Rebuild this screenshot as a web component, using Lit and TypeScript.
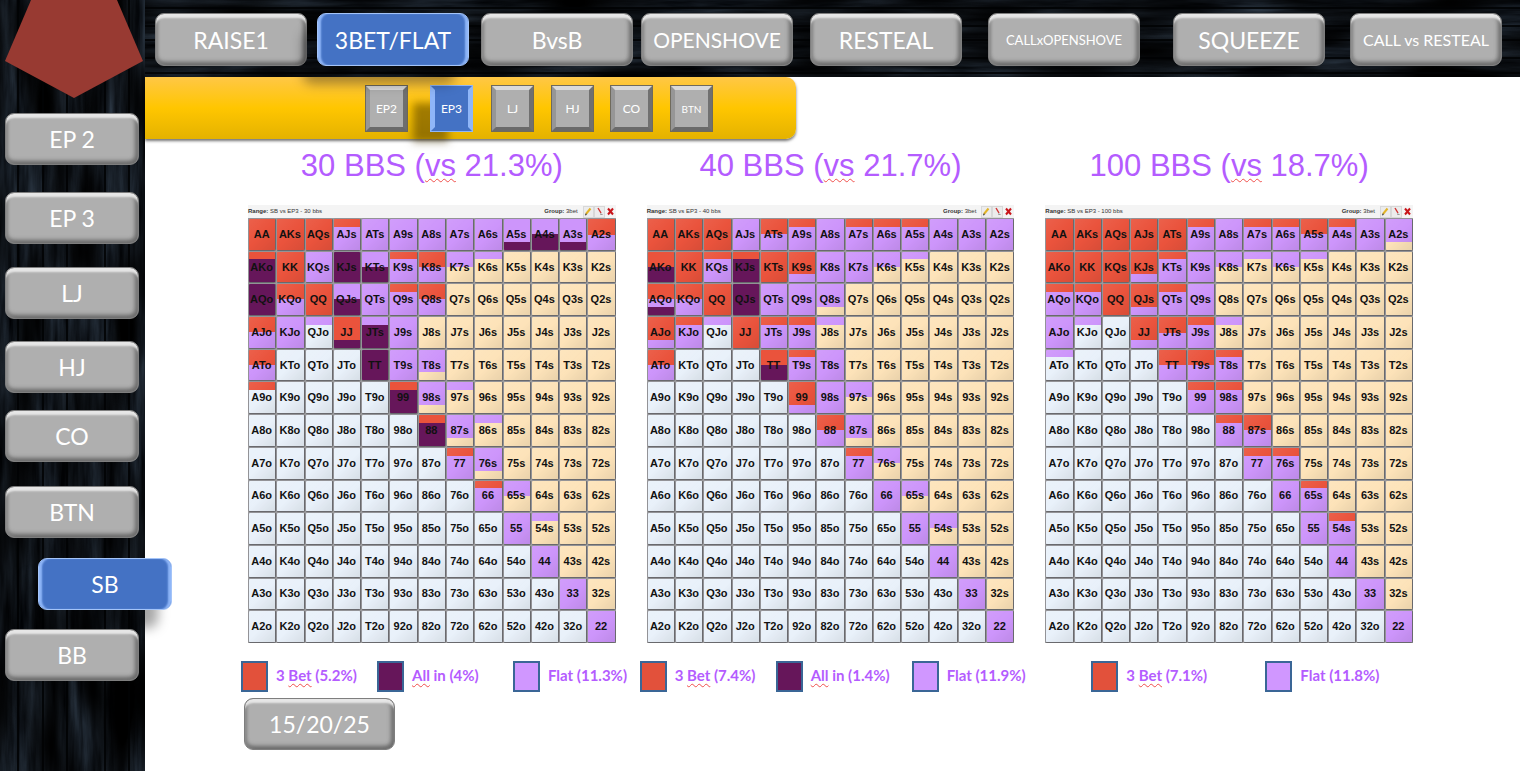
import { LitElement, html, css, svg } from "lit";
import { customElement, property } from "lit/decorators.js";

interface LegendItem {
  kind: "bet" | "shove" | "flat";
  marked: string;
  rest: string;
  lead: string;
}

interface Chart {
  stack: string;
  pct: string;
  actions: Record<string, string>;
  legend: LegendItem[];
}

const RANKS = [..."AKQJT98765432"];

const COLORS: Record<string, string> = {
  R: "#ea533c",
  P: "#cd95fb",
  D: "#66165a",
  S: "#fde3b9",
  O: "#e9f1fa",
};

/* Every hand is split in quarters, top to bottom: R = 3-bet, P = flat, D = all in, N = fold. */
const CHARTS: Chart[] = [
  {
    stack: "30",
    pct: "21.3%",
    actions: {
      RRRR: "AA AKs AQs KK QQ",
      PPPP: "ATs A9s A8s A7s A6s KQs QTs KJo J9s T9s 55 44 33 22",
      DDDD: "KJs AQo TT",
      RPPP: "AJs K9s Q9s 77 66",
      PPPD: "A5s A3s",
      PPDD: "A4s KTs QJs",
      RRPP: "A2s K8s KQo Q8s AJo ATo",
      RDDD: "AKo 99 88",
      PPNN: "K7s 65s",
      PNNN: "K6s QJo 97s 86s 54s",
      RRRD: "JJ",
      PDDD: "JTs",
      PPPN: "T8s 98s 87s 76s",
      RNNN: "A9o",
    },
    legend: [
      { kind: "bet", lead: "3 ", marked: "Bet", rest: " (5.2%)" },
      { kind: "shove", lead: "", marked: "All", rest: " in (4%)" },
      { kind: "flat", lead: "Flat (11.3%)", marked: "", rest: "" },
    ],
  },
  {
    stack: "40",
    pct: "21.7%",
    actions: {
      RRRR: "AA AKs AQs KK KTs QQ JJ",
      PPPP: "AJs A8s A4s A3s A2s K8s K7s QTs Q9s T8s 98s 66 55 44 33 22",
      DDDD: "QJs",
      RRPP: "ATs KQo ATo 88",
      RPPP: "A9s A7s A6s A5s KQs KJo JTs J9s T9s 77",
      RRDD: "AKo TT",
      RDDD: "KJs",
      RRRP: "K9s AJo 99",
      PPNN: "K6s 97s 76s 65s 54s",
      PNNN: "K5s QJo J8s",
      RRPD: "AQo",
      PPPN: "Q8s 87s",
    },
    legend: [
      { kind: "bet", lead: "3 ", marked: "Bet", rest: " (7.4%)" },
      { kind: "shove", lead: "", marked: "All", rest: " in (1.4%)" },
      { kind: "flat", lead: "Flat (11.9%)", marked: "", rest: "" },
    ],
  },
  {
    stack: "100",
    pct: "18.7%",
    actions: {
      RRRR: "AA AKs AQs AJs ATs AKo KK KQs QQ",
      PPPP: "A8s A3s K9s Q9s AJo 66 55 44 33 22",
      RPPP: "A9s A7s A6s A4s KTs AQo KQo QTs J9s T8s 99 98s 88 77 76s 65s 54s",
      RRPP: "A5s JTs TT T9s 87s",
      PPPN: "A2s",
      RRRP: "KJs QJs JJ",
      PPNN: "K8s K6s",
      PNNN: "K7s K5s KJo J8s ATo",
    },
    legend: [
      { kind: "bet", lead: "3 ", marked: "Bet", rest: " (7.1%)" },
      { kind: "flat", lead: "Flat (11.8%)", marked: "", rest: "" },
    ],
  },
];

const SHEEN = "linear-gradient(135deg,rgba(255,255,255,.08),transparent 50%,rgba(0,0,0,.08))";

function cellFill(pattern: string, fold: string): string {
  const stops = [...pattern].map((c, i) => {
    const color = COLORS[c === "N" ? fold : c];
    return `${color} ${i * 25}% ${(i + 1) * 25}%`;
  });
  const bands = `linear-gradient(${stops.join(",")})`;
  return pattern.includes("D") ? bands : `${SHEEN},${bands}`;
}

@customElement("range-chart")
class RangeChart extends LitElement {
  @property({ attribute: false }) chart!: Chart;

  static styles = css`
    :host { display: block; min-width: 0; }
    h2 {
      margin: 0 0 12px;
      font: 400 31px/54px "Liberation Sans", Arial, sans-serif;
      color: #b45cff;
      text-align: center;
      white-space: nowrap;
    }
    .marked {
      text-decoration: underline wavy #f0504b 1px;
      text-underline-offset: 2px;
      text-decoration-skip-ink: none;
    }
    .bar {
      display: flex;
      align-items: center;
      height: 13px;
      background: #f4f4f4;
      color: #333;
      font: 6px/13px "Liberation Sans", sans-serif;
      white-space: nowrap;
    }
    .group { margin-left: auto; margin-right: 5px; }
    .tool {
      width: 11px;
      height: 12px;
      padding: 0;
      border: 1px solid #d8d8d8;
      background: #ececec;
      display: grid;
      place-items: center;
    }
    .tool.close { border-color: transparent; background: none; }
    .tool svg { width: 9px; height: 9px; display: block; }
    table {
      width: 100%;
      height: 425px;
      table-layout: fixed;
      border-spacing: 0;
      background: #aaa;
    }
    td {
      padding: 0 1px 1px 0;
      border: 1px solid #69696d;
      border-top-color: #939397;
      border-left-color: #939397;
      border-radius: 2px;
      text-align: center;
      vertical-align: middle;
      color: #111;
      font: 700 11px/14px "Liberation Sans", Arial, sans-serif;
    }
    .legend {
      display: flex;
      list-style: none;
      margin: 18px 0 0 -7px;
      padding: 0;
      color: #b45cff;
      font: 700 15px/28px Lato, sans-serif;
      white-space: nowrap;
    }
    .legend li { flex: none; width: 136px; display: flex; gap: 8px; }
    .legend.two { margin-left: 46px; }
    .legend.two li { width: 174px; }
    .swatch {
      box-sizing: border-box;
      width: 27px;
      height: 31px;
      border: 2px solid #3a6696;
    }
    .bet { background: #e2513b; }
    .shove { background: #66165a; }
    .flat { background: #d097ff; }
  `;

  render() {
    const c = this.chart;
    const lookup = new Map<string, string>();
    for (const [pattern, hands] of Object.entries(c.actions))
      for (const hand of hands.split(" ")) lookup.set(hand, pattern);

    return html`
      <h2>${c.stack} BBS (<span class="marked">vs</span> ${c.pct})</h2>
      <div class="bar">
        <span><b>Range:</b> SB vs EP3 - ${c.stack} bbs</span>
        <span class="group"><b>Group:</b> 3bet</span>
        <button class="tool" aria-label="Edit">
          <svg viewBox="0 0 9 9"><path d="M2 7 L6.5 1.5" stroke="#e2b428" stroke-width="2"/><path d="M1.4 8.2 L2.4 6.6" stroke="#444" stroke-width="1.2"/></svg>
        </button>
        <button class="tool" aria-label="Clear">
          <svg viewBox="0 0 9 9"><path d="M3 1 L6 6" stroke="#d03030" stroke-width="1.4"/><path d="M5 7 L7.5 7.5" stroke="#888" stroke-width="1"/></svg>
        </button>
        <button class="tool close" aria-label="Close">
          <svg viewBox="0 0 9 9"><path d="M2 1.5 L7 7.5 M7 1.5 L2 7.5" stroke="#c8151b" stroke-width="2"/></svg>
        </button>
      </div>
      <table aria-label="SB vs EP3, ${c.stack} bbs">
        <tbody>
          ${RANKS.map((_, row) => html`<tr>
            ${RANKS.map((_, col) => {
              const suffix = row === col ? "" : col > row ? "s" : "o";
              const hand = RANKS[Math.min(row, col)] + RANKS[Math.max(row, col)] + suffix;
              const fill = cellFill(lookup.get(hand) ?? "NNNN", col > row ? "S" : "O");
              return html`<td style="background:${fill}">${hand}</td>`;
            })}
          </tr>`)}
        </tbody>
      </table>
      <ul class="legend ${c.legend.length === 2 ? "two" : ""}">
        ${c.legend.map((l) => html`<li>
          <span class="swatch ${l.kind}"></span>
          <span>${l.lead}${l.marked ? html`<span class="marked">${l.marked}</span>` : ""}${l.rest}</span>
        </li>`)}
      </ul>
    `;
  }
}

@customElement("wood-panel")
class WoodPanel extends LitElement {
  @property({ type: Boolean }) vertical = false;

  static styles = css`
    :host { display: block; background: #06080b; overflow: hidden; }
    svg { display: block; width: 100%; height: 100%; }
  `;

  render() {
    const v = this.vertical;
    const grain = v ? "0.12 0.012" : "0.012 0.12";
    const patch = v ? "0.03 0.008" : "0.008 0.03";
    const seams = v ? [17, 42, 66, 104, 128] : [7, 25, 39, 57, 72];
    return html`<svg aria-hidden="true">
      <filter id="grain" x="0" y="0" width="100%" height="100%" color-interpolation-filters="sRGB">
        <feTurbulence type="fractalNoise" baseFrequency=${grain} numOctaves="4" seed="8" result="g" />
        <feColorMatrix in="g" result="lines" values="0.22 0 0 0 -0.03  0.27 0 0 0 -0.03  0.32 0 0 0 -0.025  0 0 0 0 1" />
        <feTurbulence type="fractalNoise" baseFrequency=${patch} numOctaves="2" seed="3" result="p" />
        <feColorMatrix in="p" result="light" values="2.6 0 0 0 -0.7  2.6 0 0 0 -0.7  2.6 0 0 0 -0.7  0 0 0 0 1" />
        <feBlend in="lines" in2="light" mode="multiply" />
      </filter>
      <rect width="100%" height="100%" filter="url(#grain)" />
      ${seams.map((s) => v
        ? svg`<rect x=${s} y="0" width="2" height="100%" fill="#010203" opacity=".85" />`
        : svg`<rect x="0" y=${s} width="100%" height="2" fill="#010203" opacity=".85" />`)}
    </svg>`;
  }
}

@customElement("app-root")
class AppRoot extends LitElement {
  static styles = css`
    :host {
      display: grid;
      grid-template-columns: 145px minmax(0, 1fr);
      grid-template-rows: 77px 1fr;
      min-height: 100vh;
      background: #fff;
      font-family: Lato, sans-serif;
    }
    .side { grid-row: 1 / 3; display: grid; }
    .top { display: grid; }
    .side > *, .top > * { grid-area: 1 / 1; min-width: 0; }
    .side nav, .top nav, .side-content { position: relative; }
    .pentagon { display: block; width: 138px; height: 98px; margin-left: 5px; }
    .side nav {
      display: grid;
      grid-template-rows: 79px 75px 74px 69px 76px 72px 71px 54px;
      padding: 15px 6px 0 5px;
    }
    .top nav {
      display: grid;
      grid-template-columns: 162fr 164fr 160fr 169fr 178fr 185fr 177fr 170fr;
      padding: 13px 0 0 10px;
    }
    .key {
      box-sizing: border-box;
      padding: 0;
      width: 100%;
      height: 52px;
      border: 1px solid #7e7e7e;
      border-radius: 9px;
      background: #afafaf;
      box-shadow:
        inset 0 5px 2px -1px #e6e6e6,
        inset 3px 0 3px -1px #868686,
        inset -4px 0 4px -1px #6e6e6e,
        inset 0 -4px 4px -1px #686868;
      color: #fff;
      font: 400 23px/50px Lato, sans-serif;
      text-align: center;
      white-space: nowrap;
    }
    .top .key { width: 152px; height: 53px; }
    .key.long { font-size: 21px; }
    .key.small { font-size: 13px; }
    .key.medium { font-size: 16px; }
    .key.on {
      border-color: #a4c4f8;
      background: #4472c4;
      box-shadow:
        inset 4px 0 2px -1px #8fb6f8,
        inset -4px 0 2px -1px #8fb6f8,
        -14px 18px 12px rgba(0, 0, 0, 0.35);
    }
    .side .key.on { margin-left: 33px; }
    .seats {
      box-sizing: border-box;
      width: 651px;
      max-width: 100%;
      height: 62px;
      padding: 8px 0 0 220px;
      display: grid;
      grid-template-columns: 65px 61px 60px 59px 60px 43px;
      border-radius: 0 10px 10px 0;
      background: linear-gradient(#ffc746, #ffc600 50%, #e4b200);
      box-shadow: 0 2px 3px rgba(0, 0, 0, 0.55);
    }
    .seat {
      box-sizing: border-box;
      width: 43px;
      height: 47px;
      padding: 0;
      border: 5px solid;
      border-color: #dadada #707070 #6a6a6a #969696;
      outline: 1px solid #6f6a5c;
      outline-offset: -1px;
      background: #afafaf;
      color: #fff;
      font: 400 12px/36px Lato, sans-serif;
      text-align: center;
    }
    .seat.tiny { font-size: 10px; }
    .seat.on {
      border-color: #4472c4 #8fb6f8;
      outline-color: #8fb6f8;
      background: #4472c4;
      box-shadow: -21px 14px 8px -4px rgba(70, 50, 0, 0.5);
    }
    .charts {
      display: grid;
      grid-template-columns: repeat(3, minmax(0, 1fr));
      gap: 31px;
      padding: 0 107px 0 103px;
    }
    .more { width: 151px; margin: 6px 0 20px 99px; }
  `;

  render() {
    const tabs: [string, string][] = [
      ["RAISE1", ""], ["3BET/FLAT", "on"], ["BvsB", ""], ["OPENSHOVE", "long"],
      ["RESTEAL", ""], ["CALLxOPENSHOVE", "small"], ["SQUEEZE", ""], ["CALL vs RESTEAL", "medium"],
    ];
    const positions = ["EP 2", "EP 3", "LJ", "HJ", "CO", "BTN", "SB", "BB"];
    const seats = ["EP2", "EP3", "LJ", "HJ", "CO", "BTN"];
    return html`
      <aside class="side">
        <wood-panel vertical></wood-panel>
        <div class="side-content">
          <svg class="pentagon" viewBox="0 0 138 98" aria-hidden="true">
            <path d="M26 0 H112 L138 61 L69 98 L0 61 Z" fill="#983a32" />
          </svg>
          <nav aria-label="Position">
            ${positions.map((p) => html`<button class="key ${p === "SB" ? "on" : ""}">${p}</button>`)}
          </nav>
        </div>
      </aside>
      <header class="top">
        <wood-panel></wood-panel>
        <nav aria-label="Action">
          ${tabs.map(([label, kind]) => html`<button class="key ${kind}">${label}</button>`)}
        </nav>
      </header>
      <main>
        <nav class="seats" aria-label="Opponent">
          ${seats.map((s) => html`<button class="seat ${s === "EP3" ? "on" : ""} ${s === "BTN" ? "tiny" : ""}">${s}</button>`)}
        </nav>
        <div class="charts">
          ${CHARTS.map((c) => html`<range-chart .chart=${c}></range-chart>`)}
        </div>
        <button class="key more">15/20/25</button>
      </main>
    `;
  }
}
